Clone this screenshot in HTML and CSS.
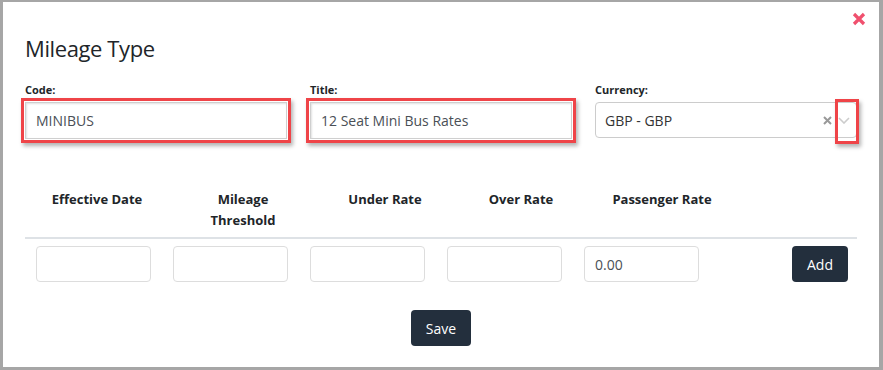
FILE: index.html
```html
<!DOCTYPE html>
<html lang="en">

<head>
  <meta charset="UTF-8">
  <meta name="viewport" content="width=device-width, initial-scale=1.0">
  <title>Mileage Type</title>
  <link rel="stylesheet" href="styles.css">
</head>

<body>
  <div class="modal">
    <div class="modal-header">
      <h1 class="modal-title">Mileage Type</h1>
      <button class="close" aria-label="Close">
        <svg width="14" height="14" viewBox="0 0 14 14">
          <path d="M2 2 L12 12 M12 2 L2 12" stroke="#f0506e" stroke-width="3.2" />
        </svg>
      </button>
    </div>

    <div class="modal-body">
      <div class="fields">
        <div class="field">
          <label>Code:</label>
          <div class="mark">
            <input type="text" class="text-input" value="MINIBUS">
          </div>
        </div>
        <div class="field">
          <label>Title:</label>
          <div class="mark">
            <input type="text" class="text-input" value="12 Seat Mini Bus Rates">
          </div>
        </div>
        <div class="field">
          <label>Currency:</label>
          <div class="select">
            <span class="select-value">GBP - GBP</span>
            <span class="select-clear">
              <svg width="9" height="9" viewBox="0 0 9 9">
                <path d="M1 1 L8 8 M8 1 L1 8" stroke="#999" stroke-width="2" />
              </svg>
            </span>
            <span class="select-arrow">
              <svg width="12" height="7" viewBox="0 0 12 7">
                <path d="M1 1 L6 6 L11 1" fill="none" stroke="#ccc" stroke-width="1.6" />
              </svg>
            </span>
            <!-- rode markering rond de pijl -->
            <span class="mark-arrow"></span>
          </div>
        </div>
      </div>

      <div class="rates">
        <div class="rates-head">
          <div>Effective Date</div>
          <div>Mileage<br>Threshold</div>
          <div>Under Rate</div>
          <div>Over Rate</div>
          <div>Passenger Rate</div>
          <div></div>
        </div>
        <div class="rates-row">
          <input type="text" class="rate-input">
          <input type="text" class="rate-input">
          <input type="text" class="rate-input">
          <input type="text" class="rate-input">
          <input type="text" class="rate-input" value="0.00">
          <button class="btn btn-add">Add</button>
        </div>
      </div>

      <div class="footer">
        <button class="btn">Save</button>
      </div>
    </div>
  </div>
</body>

</html>
```

FILE: styles.css
```css
/* Basis */
body {
  margin: 0;
  font-family: "Open Sans", "Noto Sans", sans-serif;
  color: #212529;
  background-color: #fff;
}

/* Het venster met grijze rand */
.modal {
  height: 370px;
  box-sizing: border-box;
  border-style: solid;
  border-color: #a6a6a6;
  border-width: 2px 4px 3px 3px;
  background-color: #fff;
}

.modal-header {
  display: flex;
  justify-content: space-between;
  align-items: flex-start;
  padding: 10px 13px 0 22px;
}

.modal-title {
  margin: 21px 0 0 0;
  font-size: 22px;
  font-weight: 500;
  letter-spacing: -0.4px;
  line-height: 30px;
}

.close {
  background: none;
  border: none;
  padding: 0;
  cursor: pointer;
  line-height: 0;
}

.modal-body {
  padding: 0 22px 0 22px;
}

/* Bovenste velden */
.fields {
  display: grid;
  grid-template-columns: 262px 262px 262px;
  column-gap: 23px;
  margin-top: 19px;
}

.field label {
  display: block;
  font-size: 11px;
  font-weight: 700;
  line-height: 16px;
  margin-bottom: 4px;
}

.text-input {
  display: block;
  width: 100%;
  height: 37px;
  box-sizing: border-box;
  border: 1px solid #cfcfcf;
  box-shadow: inset 1px 1px 2px rgba(0, 0, 0, 0.12);
  padding: 0 10px;
  font-family: inherit;
  font-size: 14px;
  color: #4a4f56;
}

/* Rode markering rond een veld */
.mark {
  margin: -4px;
  padding: 1px;
  border: 3px solid #ef4448;
  box-shadow: 2px 3px 4px rgba(0, 0, 0, 0.3);
}

.select {
  position: relative;
  display: flex;
  align-items: center;
  height: 36px;
  box-sizing: border-box;
  border: 1px solid #cccccc;
  border-radius: 4px;
  padding-left: 9px;
  font-size: 14px;
  color: #333;
}

.select-value {
  flex: 1;
}

.select-clear {
  display: flex;
  margin-right: 6px;
}

.select-arrow {
  display: flex;
  margin-right: 6px;
}

.mark-arrow {
  position: absolute;
  top: -4px;
  bottom: -7px;
  right: -3px;
  width: 18px;
  border: 3px solid #ef4448;
  box-shadow: 2px 3px 4px rgba(0, 0, 0, 0.3);
}

/* Tarieven tabel */
.rates {
  margin-top: 50px;
}

.rates-head {
  display: grid;
  grid-template-columns: 144px 148px 136px 136px 146px 1fr;
  text-align: center;
  font-size: 13px;
  font-weight: 700;
  line-height: 21px;
  padding-bottom: 6px;
  border-bottom: 2px solid #dee2e6;
}

.rates-row {
  display: flex;
  gap: 22px;
  padding: 7px 9px 0 11px;
}

.rate-input {
  width: 115px;
  height: 36px;
  box-sizing: border-box;
  border: 1px solid #dddddd;
  border-radius: 4px;
  padding: 0 10px;
  font-family: inherit;
  font-size: 14px;
  color: #4a4f56;
}

.btn {
  background-color: #232f3d;
  color: #fff;
  border: none;
  border-radius: 4px;
  height: 36px;
  padding: 0 15px;
  font-family: inherit;
  font-size: 14px;
  cursor: pointer;
}

.btn-add {
  margin-left: auto;
}

.footer {
  display: flex;
  justify-content: center;
  margin-top: 28px;
}
```
